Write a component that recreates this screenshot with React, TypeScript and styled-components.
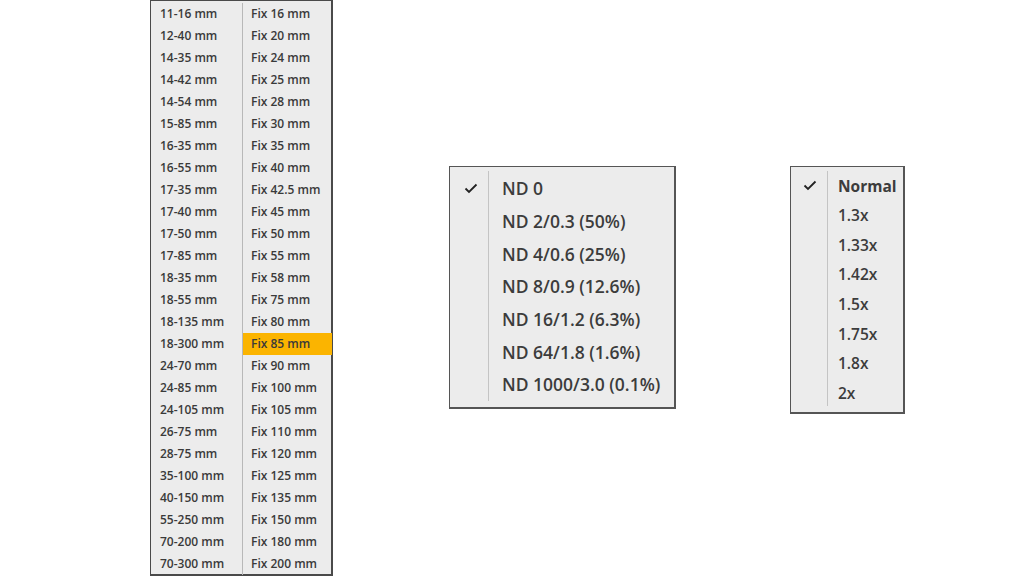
import React from "react";
import styled, { createGlobalStyle } from "styled-components";

const Global = createGlobalStyle`
  html, body { margin: 0; padding: 0; background: #ffffff; }
  body { font-family: "Open Sans", "Noto Sans", sans-serif; }
`;

const Page = styled.div`
  width: 1024px;
  height: 576px;
  overflow: hidden;
  display: flex;
  align-items: flex-start;
  padding-left: 150px;
  box-sizing: border-box;
`;

const LensMenu = styled.div`
  display: grid;
  grid-template-columns: 91px 1px 89px;
  width: 183px;
  border: 1px solid #4a4a4a;
  border-right-width: 2px;
  border-bottom-width: 2px;
  background: #ececec;
  padding: 2px 0 0;
  box-sizing: border-box;
  height: 576px;
`;

const LensColumn = styled.div`
  display: flex;
  flex-direction: column;
`;

const ColDivider = styled.div`
  background: #b8b8b8;
`;

const LensItem = styled.div<{ $active?: boolean; $pad: number }>`
  height: 22px;
  line-height: 22px;
  padding-left: ${(p) => p.$pad}px;
  font-size: 12px;
  font-weight: 600;
  color: #3a3a3a;
  white-space: nowrap;
  background: ${(p) => (p.$active ? "#fbb400" : "transparent")};
`;

const PopMenu = styled.div<{ $left: number; $width: number; $height: number }>`
  margin-left: ${(p) => p.$left}px;
  margin-top: 166px;
  width: ${(p) => p.$width}px;
  height: ${(p) => p.$height}px;
  box-sizing: border-box;
  border: 1px solid #555;
  border-right-width: 2px;
  border-bottom-width: 2px;
  background: #ececec;
  position: relative;
`;

const Separator = styled.div<{ $x: number; $top: number; $bottom: number }>`
  position: absolute;
  left: ${(p) => p.$x}px;
  top: ${(p) => p.$top}px;
  bottom: ${(p) => p.$bottom}px;
  width: 1px;
  background: #c4c4c4;
`;

const MenuList = styled.div<{ $padTop: number }>`
  display: flex;
  flex-direction: column;
  padding-top: ${(p) => p.$padTop}px;
`;

const MenuRow = styled.div<{ $h: number; $checkW: number; $size: number; $bold?: boolean }>`
  height: ${(p) => p.$h}px;
  display: flex;
  align-items: center;
  font-size: ${(p) => p.$size}px;
  font-weight: ${(p) => (p.$bold ? 700 : 600)};
  color: #3c3c3c;
  white-space: nowrap;
  & > span:first-child {
    width: ${(p) => p.$checkW}px;
    flex: none;
    display: flex;
    justify-content: center;
  }
`;

const Label = styled.span<{ $pad: number }>`
  padding-left: ${(p) => p.$pad}px;
`;

const Check = () => (
  <svg width="14" height="11" viewBox="0 0 14 11">
    <path d="M1.5 5.5 L5 9 L12.5 1.5" fill="none" stroke="#222" strokeWidth="1.8" />
  </svg>
);

const left = [
  "11-16 mm","12-40 mm","14-35 mm","14-42 mm","14-54 mm","15-85 mm","16-35 mm","16-55 mm",
  "17-35 mm","17-40 mm","17-50 mm","17-85 mm","18-35 mm","18-55 mm","18-135 mm","18-300 mm",
  "24-70 mm","24-85 mm","24-105 mm","26-75 mm","28-75 mm","35-100 mm","40-150 mm","55-250 mm",
  "70-200 mm","70-300 mm",
];
const right = [
  "Fix 16 mm","Fix 20 mm","Fix 24 mm","Fix 25 mm","Fix 28 mm","Fix 30 mm","Fix 35 mm","Fix 40 mm",
  "Fix 42.5 mm","Fix 45 mm","Fix 50 mm","Fix 55 mm","Fix 58 mm","Fix 75 mm","Fix 80 mm","Fix 85 mm",
  "Fix 90 mm","Fix 100 mm","Fix 105 mm","Fix 110 mm","Fix 120 mm","Fix 125 mm","Fix 135 mm","Fix 150 mm",
  "Fix 180 mm","Fix 200 mm",
];
const nd = [
  "ND 0","ND 2/0.3 (50%)","ND 4/0.6 (25%)","ND 8/0.9 (12.6%)","ND 16/1.2 (6.3%)","ND 64/1.8 (1.6%)","ND 1000/3.0 (0.1%)",
];
const speeds = ["Normal","1.3x","1.33x","1.42x","1.5x","1.75x","1.8x","2x"];

export default function App() {
  return (
    <>
      <Global />
      <Page>
        <LensMenu>
          <LensColumn>
            {left.map((t) => (
              <LensItem key={t} $pad={9}>{t}</LensItem>
            ))}
          </LensColumn>
          <ColDivider />
          <LensColumn>
            {right.map((t) => (
              <LensItem key={t} $pad={8} $active={t === "Fix 85 mm"}>{t}</LensItem>
            ))}
          </LensColumn>
        </LensMenu>

        <PopMenu $left={116} $width={227} $height={243}>
          <Separator $x={38} $top={4} $bottom={6} />
          <MenuList $padTop={5}>
            {nd.map((t, i) => (
              <MenuRow key={t} $h={32.67} $checkW={41} $size={17.5}>
                <span>{i === 0 ? <Check /> : null}</span>
                <Label $pad={11}>{t}</Label>
              </MenuRow>
            ))}
          </MenuList>
        </PopMenu>

        <PopMenu $left={114} $width={115} $height={248}>
          <Separator $x={36} $top={4} $bottom={6} />
          <MenuList $padTop={4}>
            {speeds.map((t, i) => (
              <MenuRow key={t} $h={29.57} $checkW={37} $size={15.5} $bold={i === 0}>
                <span>{i === 0 ? <Check /> : null}</span>
                <Label $pad={10}>{t}</Label>
              </MenuRow>
            ))}
          </MenuList>
        </PopMenu>
      </Page>
    </>
  );
}
